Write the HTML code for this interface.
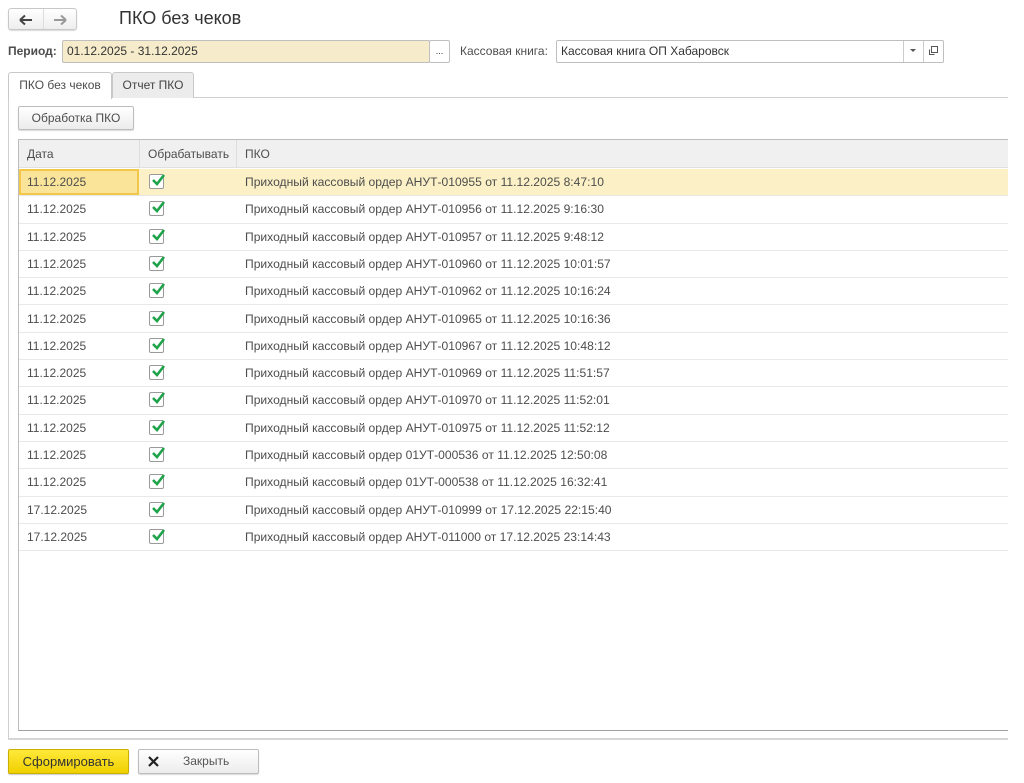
<!DOCTYPE html>
<html><head><meta charset="utf-8">
<style>
*{box-sizing:border-box;margin:0;padding:0}
body{width:1024px;height:783px;background:#fff;font-family:"Liberation Sans",sans-serif;font-size:12px;color:#4d4d4d;position:relative;overflow:hidden}
.abs{position:absolute}
.nav{left:8px;top:8px;width:69px;height:22px;border:1px solid #c8c8c8;border-radius:3px;background:linear-gradient(#fff,#eee);box-shadow:0 1px 1px rgba(0,0,0,.15)}
.nav .sep{position:absolute;left:34px;top:0;bottom:0;width:1px;background:#ddd}
h1{position:absolute;left:119px;top:8px;font-size:18px;font-weight:normal;color:#333}
.lbl{font-size:12px}
.fld{border:1px solid #bfbfbf;border-radius:2px;height:23px;line-height:21px;padding-left:4px;color:#333}
.tab{top:72px;height:26px;line-height:25px;text-align:center;border:1px solid #c8c8c8;border-bottom:none;border-radius:3px 3px 0 0}
.btn{border:1px solid #bdbdbd;border-radius:2px;background:linear-gradient(#fff,#ececec);box-shadow:0 1px 1px rgba(0,0,0,.15);text-align:center}
.row{position:absolute;left:19px;width:989px;height:27.3px;border-bottom:1px solid #e8e8e8;line-height:26px}
.row span{position:absolute}
.c1{left:8px}.c3{left:226px;font-size:12.1px}
.cb{position:absolute;left:130px;top:5px;width:15px;height:15px;border:1px solid #9a9a9a;border-radius:2px;background:#fff}
.cb svg{position:absolute;left:0;top:-3px}
</style></head><body>
<div class="abs nav"><div class="sep"></div>
<svg class="abs" style="left:10px;top:5px" width="14" height="12"><path d="M1 6H13M1 6L6 1.5M1 6L6 10.5" stroke="#444" stroke-width="2" fill="none"/></svg>
<svg class="abs" style="left:44px;top:5px" width="14" height="12"><path d="M1 6H13M13 6L8 1.5M13 6L8 10.5" stroke="#999" stroke-width="2" fill="none"/></svg>
</div>
<h1>ПКО без чеков</h1>
<div class="abs lbl" style="left:8px;top:44px;font-weight:bold;color:#4d4d4d">Период:</div>
<div class="abs fld" style="left:62px;top:40px;width:368px;background:#f6eccb">01.12.2025 - 31.12.2025</div>
<div class="abs fld" style="left:429px;top:40px;width:21px;background:#fff;padding:0;text-align:center;font-size:9px">...</div>
<div class="abs lbl" style="left:460px;top:44px">Кассовая книга:</div>
<div class="abs fld" style="left:556px;top:40px;width:388px;background:#fff">Кассовая книга ОП Хабаровск</div>
<div class="abs" style="left:903px;top:41px;width:1px;height:21px;background:#ccc"></div>
<div class="abs" style="left:923px;top:41px;width:1px;height:21px;background:#ccc"></div>
<svg class="abs" style="left:909px;top:48px" width="8" height="6"><path d="M1 1H7L4 4Z" fill="#555"/></svg>
<svg class="abs" style="left:928px;top:45px" width="11" height="11"><rect x="3.5" y="1.5" width="6" height="6" fill="none" stroke="#555"/><path d="M1.5 4.5V9.5H6.5" fill="none" stroke="#555"/></svg>
<div class="abs" style="left:8px;top:97px;width:1000px;height:643px;border:1px solid #d0d0d0;border-right:none;border-bottom:2px solid #d6d6d6"></div>
<div class="abs tab" style="left:8px;width:104px;background:#fff;height:27px">ПКО без чеков</div>
<div class="abs tab" style="left:112px;width:82px;background:#ececec;color:#444">Отчет ПКО</div>
<div class="abs btn" style="left:18px;top:106px;width:116px;height:24px;line-height:22px">Обработка ПКО</div>
<div class="abs" style="left:18px;top:139px;width:990px;height:592px;border:1px solid #bcbcbc;border-right:none;border-bottom:1px solid #a0a0a0"></div>
<div class="abs" style="left:19px;top:140px;width:989px;height:28px;background:#f0f0f0;border-bottom:1px solid #e0e0e0"></div>
<div class="abs" style="left:139px;top:140px;width:1px;height:28px;background:#ddd"></div>
<div class="abs" style="left:236px;top:140px;width:1px;height:28px;background:#ddd"></div>
<div class="abs" style="left:27px;top:147px">Дата</div>
<div class="abs" style="left:148px;top:147px">Обрабатывать</div>
<div class="abs" style="left:245px;top:147px">ПКО</div>
<div id="rows"></div>
<div class="abs" style="left:8px;top:749px;width:121px;height:25px;border:1px solid #c9b000;border-radius:2px;background:linear-gradient(#ffe93a,#f0d000);text-align:center;line-height:23px;font-size:13px;color:#333;box-shadow:0 1px 1px rgba(0,0,0,.2)">Сформировать</div>
<div class="abs btn" style="left:138px;top:749px;width:121px;height:25px;line-height:23px">
<svg class="abs" style="left:9px;top:6px" width="11" height="11"><path d="M1 1L10 10M10 1L1 10" stroke="#222" stroke-width="2.2"/></svg>
<span style="position:absolute;left:44px;color:#555">Закрыть</span></div>
<script>
var d=[["11.12.2025","АНУТ-010955 от 11.12.2025 8:47:10"],["11.12.2025","АНУТ-010956 от 11.12.2025 9:16:30"],["11.12.2025","АНУТ-010957 от 11.12.2025 9:48:12"],["11.12.2025","АНУТ-010960 от 11.12.2025 10:01:57"],["11.12.2025","АНУТ-010962 от 11.12.2025 10:16:24"],["11.12.2025","АНУТ-010965 от 11.12.2025 10:16:36"],["11.12.2025","АНУТ-010967 от 11.12.2025 10:48:12"],["11.12.2025","АНУТ-010969 от 11.12.2025 11:51:57"],["11.12.2025","АНУТ-010970 от 11.12.2025 11:52:01"],["11.12.2025","АНУТ-010975 от 11.12.2025 11:52:12"],["11.12.2025","01УТ-000536 от 11.12.2025 12:50:08"],["11.12.2025","01УТ-000538 от 11.12.2025 16:32:41"],["17.12.2025","АНУТ-010999 от 17.12.2025 22:15:40"],["17.12.2025","АНУТ-011000 от 17.12.2025 23:14:43"]];
var h="";
d.forEach(function(r,i){
var top=169+i*27.3;
var bg=i==0?"background:#fbf0c6;":"";
h+='<div class="row" style="top:'+top+'px;'+bg+'">';
if(i==0)h+='<div style="position:absolute;left:0;top:0;width:120px;height:26px;border:2px solid #f3c74a;background:#f9e49a"></div>';
h+='<span class="c1">'+r[0]+'</span><div class="cb"><svg width="16" height="16"><path d="M3 8L7 12L14 3" stroke="#1fa34a" stroke-width="2.6" fill="none"/></svg></div><span class="c3">Приходный кассовый ордер '+r[1]+'</span></div>';
});
document.getElementById("rows").innerHTML=h;
</script>
</body></html>
